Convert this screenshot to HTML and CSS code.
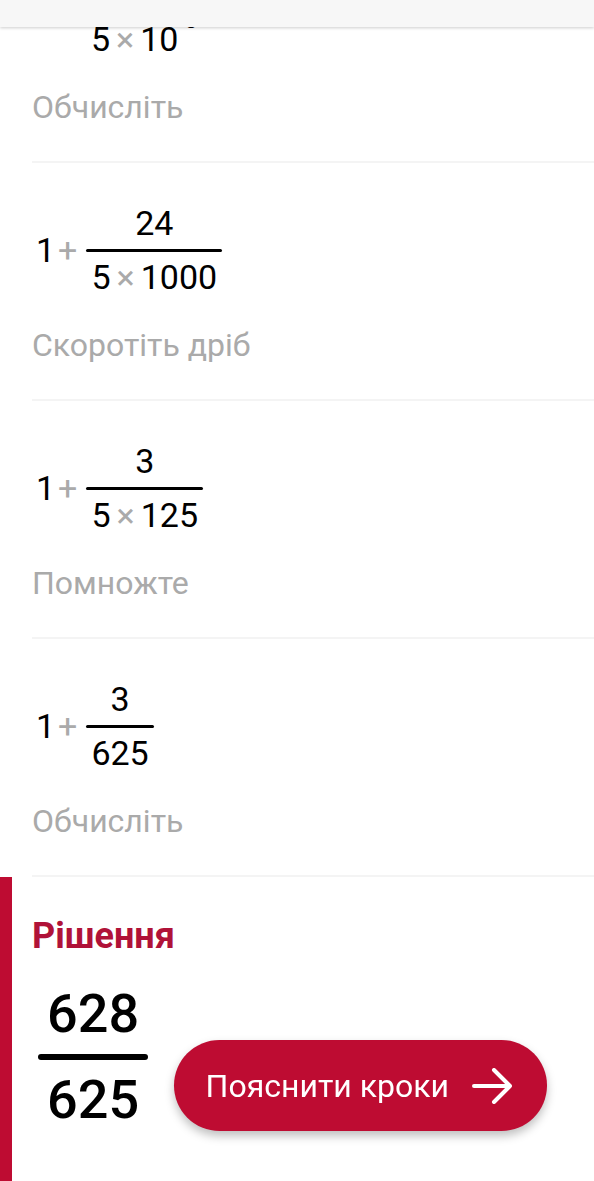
FILE: index.html
```html
<!DOCTYPE html>
<html lang="uk">

<head>
  <meta charset="UTF-8">
  <meta name="viewport" content="width=device-width, initial-scale=1.0">
  <title>Рішення</title>
  <link rel="stylesheet" href="styles.css">
</head>

<body>
  <header class="topbar"></header>

  <main class="steps">
    <section class="step step-first">
      <div class="math">
        <div class="fraction fraction-tail">
          <div class="den"><span>5</span><span class="op">×</span><span>10<sup>3</sup></span></div>
        </div>
      </div>
      <p class="label">Обчисліть</p>
    </section>

    <section class="step">
      <div class="math">
        <span>1</span><span class="op">+</span>
        <div class="fraction">
          <div class="num">24</div>
          <div class="bar"></div>
          <div class="den"><span>5</span><span class="op">×</span><span>1000</span></div>
        </div>
      </div>
      <p class="label">Скоротіть дріб</p>
    </section>

    <section class="step">
      <div class="math">
        <span>1</span><span class="op">+</span>
        <div class="fraction">
          <div class="num">3</div>
          <div class="bar"></div>
          <div class="den"><span>5</span><span class="op">×</span><span>125</span></div>
        </div>
      </div>
      <p class="label">Помножте</p>
    </section>

    <section class="step">
      <div class="math">
        <span>1</span><span class="op">+</span>
        <div class="fraction">
          <div class="num">3</div>
          <div class="bar"></div>
          <div class="den">625</div>
        </div>
      </div>
      <p class="label">Обчисліть</p>
    </section>
  </main>

  <section class="solution">
    <h2 class="title">Рішення</h2>
    <div class="result">
      <div class="num">628</div>
      <div class="bar"></div>
      <div class="den">625</div>
    </div>
  </section>

  <button class="explain" type="button">
    Пояснити кроки
    <svg class="arrow" viewBox="0 0 40 36" aria-hidden="true">
      <path d="M2 18H38M22 2L38 18L22 34" />
    </svg>
  </button>
</body>

</html>
```

FILE: styles.css
```css
* {
  box-sizing: border-box;
}

body {
  margin: 0;
  min-height: 100vh;
  display: flex;
  flex-direction: column;
  background: #fff;
  color: #000;
  font-family: Roboto, "Noto Sans", sans-serif;
  overflow: hidden;
}

.topbar {
  position: fixed;
  top: 0;
  left: 0;
  right: 0;
  z-index: 2;
  height: 27px;
  background: #f7f7f7;
  box-shadow: 0 1px 3px rgba(0, 0, 0, 0.2);
}

.step {
  margin-left: 32px;
  padding: 40px 0 34px;
  border-bottom: 2px solid #f4f4f4;
}

.step-first {
  padding-top: 19px;
}

.math {
  display: flex;
  align-items: center;
  padding-left: 4px;
  font-size: 34px;
  line-height: 40px;
}

.math > .op {
  margin-left: 3px;
}

.fraction {
  margin-left: 9px;
  text-align: center;
}

.fraction-tail {
  margin-left: 50px;
}

.fraction .num,
.fraction .den {
  padding: 0 5px;
}

.fraction .bar {
  height: 3px;
  margin: 6px 0 5px;
  border-radius: 2px;
  background: #000;
}

.den {
  display: flex;
  justify-content: center;
}

.op {
  color: #aaa;
}

.den .op {
  margin: 0 6px;
}

sup {
  margin-left: 6px;
  font-size: 24px;
  line-height: 0;
  vertical-align: 23px;
}

.label {
  margin: 28px 0 0;
  color: #aaa;
  font-size: 32px;
  line-height: 40px;
}

.solution {
  flex: 1;
  padding: 39px 20px 48px;
  border-left: 12px solid #be0c32;
}

.title {
  margin: 0;
  color: #b01238;
  font-size: 36px;
  font-weight: 700;
  line-height: 40px;
}

.result {
  width: fit-content;
  margin: 26px 0 0 6px;
  font-size: 54px;
  font-weight: 500;
  line-height: 64px;
}

.result .num,
.result .den {
  padding: 0 9px;
}

.result .bar {
  height: 6px;
  margin: 8px 0;
  border-radius: 3px;
  background: #000;
}

/* floating over the list */
.explain {
  position: fixed;
  right: 47px;
  bottom: 50px;
  display: flex;
  align-items: center;
  gap: 23px;
  height: 91px;
  padding: 0 35px 0 32px;
  border: 0;
  border-radius: 46px;
  background: #be0c32;
  box-shadow: 0 5px 10px rgba(0, 0, 0, 0.25);
  color: #fff;
  font-family: inherit;
  font-size: 32px;
  line-height: 40px;
  white-space: nowrap;
}

.arrow {
  width: 40px;
  height: 36px;
  fill: none;
  stroke: #fff;
  stroke-width: 4;
  stroke-linecap: round;
  stroke-linejoin: round;
}
```
